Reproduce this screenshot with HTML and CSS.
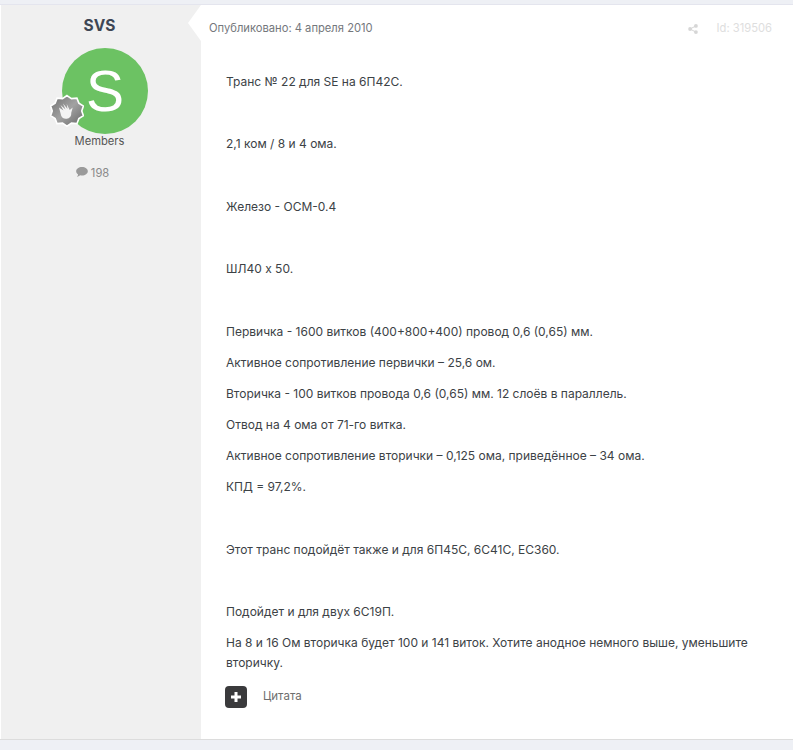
FILE: index.html
```html
<!DOCTYPE html>
<html lang="en">

<head>
    <title>Post</title>
    <link rel="stylesheet" href="styles.css">
</head>

<body>
    <article class="post">
        <aside class="author">
            <h3 class="author-name">SVS</h3>
            <div class="avatar-wrap">
                <div class="avatar">S</div>
                <svg class="rank" viewBox="0 0 34 34" width="34" height="34">
                    <defs>
                        <linearGradient id="rankFill" x1="0" y1="0" x2="1" y2="1">
                            <stop offset="0" stop-color="#6f6f6f" />
                            <stop offset="0.5" stop-color="#a2a2a2" />
                            <stop offset="1" stop-color="#666" />
                        </linearGradient>
                    </defs>
                    <path d="M17 1l5 3.400 6-.6 2.200 5.600 5 3.200-1.800 5.400 1.800 5.400-5 3.200-2.200 5.600-6-.6-5 3.400-5-3.400-6 .6-2.200-5.600-5-3.200 1.800-5.400-1.800-5.400 5-3.200 2.200-5.600 6 .6z" transform="translate(1.700 1.700) scale(.9)" fill="url(#rankFill)" stroke="#fff" stroke-width="1.800" />
                    <path d="M9 14.500l4.500 3-3-5.500 5 4.500-2.500-6 4.500 5.500-.8-5 3 6 3-2.500-1.500 5.500c.3 3-1.500 5.500-4.500 5.800-3 .3-4.500-1-5.500-3z" fill="#f4f4f4" />
                </svg>
            </div>
            <div class="author-group">Members</div>
            <div class="author-posts">
                <svg viewBox="0 0 14 12" width="12" height="10">
                    <path d="M7 0c3.900 0 7 2.300 7 5.100s-3.100 5.100-7 5.100c-.8 0-1.500-.1-2.200-.3C3.700 10.900 2.300 11.600.8 11.800c.8-.8 1.400-1.800 1.500-2.900C.9 8 0 6.600 0 5.100 0 2.300 3.100 0 7 0z" fill="#9a9a9a" />
                </svg>
                198
            </div>
        </aside>

        <div class="content">
            <span class="arrow"></span>
            <header class="post-meta">
                <span class="post-date">Опубликовано: 4 апреля 2010</span>
                <div class="post-tools">
                    <svg viewBox="0 0 12 12" width="10" height="10">
                        <circle cx="2.500" cy="6" r="2.300" />
                        <circle cx="9.500" cy="2.300" r="2.300" />
                        <circle cx="9.500" cy="9.700" r="2.300" />
                        <path d="M2.500 6l7-3.700M2.500 6l7 3.700" stroke="#d6d6d6" stroke-width="1.200" />
                    </svg>
                    <span>Id: 319506</span>
                </div>
            </header>

            <div class="post-text">
                <p>Транс № 22 для SE на 6П42С.</p>
                <p>&nbsp;</p>
                <p>2,1 ком / 8 и 4 ома.</p>
                <p>&nbsp;</p>
                <p>Железо - ОСМ-0.4</p>
                <p>&nbsp;</p>
                <p>ШЛ40 х 50.</p>
                <p>&nbsp;</p>
                <p>Первичка - 1600 витков (400+800+400) провод 0,6 (0,65) мм.</p>
                <p>Активное сопротивление первички – 25,6 ом.</p>
                <p>Вторичка - 100 витков провода 0,6 (0,65) мм. 12 слоёв в параллель.</p>
                <p>Отвод на 4 ома от 71-го витка.</p>
                <p>Активное сопротивление вторички – 0,125 ома, приведённое – 34 ома.</p>
                <p>КПД = 97,2%.</p>
                <p>&nbsp;</p>
                <p>Этот транс подойдёт также и для 6П45С, 6С41С, ЕС360.</p>
                <p>&nbsp;</p>
                <p>Подойдет и для двух 6С19П.</p>
                <p>На 8 и 16 Ом вторичка будет 100 и 141 виток. Хотите анодное немного выше, уменьшите вторичку.</p>
            </div>

            <footer class="post-actions">
                <button type="button" class="quote-add">
                    <svg viewBox="0 0 10 10" width="10" height="10">
                        <path d="M3.500 0h3v3.500H10v3H6.500V10h-3V6.500H0v-3h3.500z" fill="#fff" />
                    </svg>
                </button>
                <span class="quote-label">Цитата</span>
            </footer>
        </div>
    </article>
</body>

</html>
```

FILE: styles.css
```css
body {
    font-family: Inter, "Liberation Sans", sans-serif;
    font-size: 12px;
    line-height: 19.5px;
    color: #3c4246;
    background-color: #eef0f5;
    margin: 0;
    padding: 4px 0 10px;
}

.post {
    display: flex;
    height: 736px;
    background-color: #fff;
    border-top: 1px solid #e4e5ee;
    border-bottom: 1px solid #dcdcdc;
    box-sizing: border-box;
}

.author {
    width: 200px;
    margin-left: 1px;
    padding: 11px 3px 0 0;
    background-color: #f0f0f0;
    text-align: center;
    box-sizing: border-box;
}

.author-name {
    margin: 0;
    font-size: 15.5px;
    line-height: 19px;
    font-weight: 700;
    color: #3d4654;
}

.avatar-wrap {
    position: relative;
    width: 86px;
    height: 86px;
    margin: 13px 0 0 61px;
}

.avatar {
    width: 86px;
    height: 86px;
    border-radius: 50%;
    background-color: #6cc263;
    color: #fff;
    font-family: "Liberation Sans", sans-serif;
    font-size: 57px;
    line-height: 86px;
    text-align: center;
}

.rank {
    position: absolute;
    left: -12px;
    top: 45px;
}

.author-group {
    margin-top: -2px;
    font-size: 11.2px;
    color: #555;
}

.author-posts {
    margin: 12px 14px 0 0;
    font-size: 11.2px;
    color: #8a8a8a;
}

.content {
    position: relative;
    flex: 1;
    padding: 0 21px 0 25px;
}

.arrow {
    position: absolute;
    left: -13px;
    top: 0;
    width: 0;
    height: 0;
    border-style: solid;
    border-width: 18px 13px 18px 0;
    border-color: transparent #fff transparent transparent;
}

.post-meta {
    display: flex;
    justify-content: space-between;
    align-items: center;
    margin-left: -17px;
    padding-top: 14px;
    font-size: 11.2px;
}

.post-date {
    color: #74777c;
}

.post-tools {
    display: flex;
    align-items: center;
    gap: 19px;
    color: #dedede;
    fill: #d6d6d6;
}

.post-text {
    margin-top: 33.5px;
}

.post-text p {
    margin: 0 0 11.7px;
}

.post-actions {
    display: flex;
    align-items: center;
    gap: 16px;
    margin: 13.5px 0 0 -1px;
}

.quote-add {
    display: flex;
    align-items: center;
    justify-content: center;
    width: 22px;
    height: 22px;
    padding: 0;
    border: none;
    border-radius: 4px;
    background-color: #3a3a3c;
}

.quote-label {
    font-size: 11.5px;
    color: #6e6e6e;
}
```
